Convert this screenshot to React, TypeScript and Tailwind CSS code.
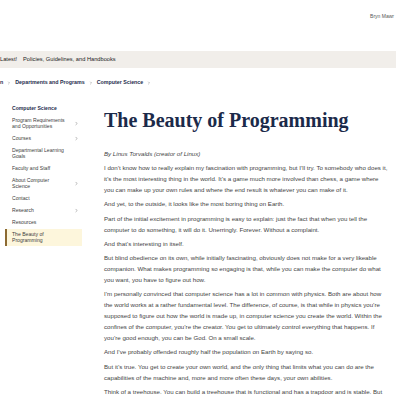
import { ChevronRight } from 'lucide-react';

const sans = { fontFamily: '"Liberation Sans", Arial, sans-serif' };

const sideItems = [
  { label: 'Program Requirements and Opportunities', chevron: true },
  { label: 'Courses', chevron: true },
  { label: 'Departmental Learning Goals', chevron: false },
  { label: 'Faculty and Staff', chevron: false },
  { label: 'About Computer Science', chevron: true },
  { label: 'Contact', chevron: false },
  { label: 'Research', chevron: true },
  { label: 'Resources', chevron: false },
];

const paragraphs = [
  "I don\u2019t know how to really explain my fascination with programming, but I\u2019ll try. To somebody who does it, it\u2019s the most interesting thing in the world. It\u2019s a game much more involved than chess, a game where you can make up your own rules and where the end result is whatever you can make of it.",
  'And yet, to the outside, it looks like the most boring thing on Earth.',
  'Part of the initial excitement in programming is easy to explain: just the fact that when you tell the computer to do something, it will do it. Unerringly. Forever. Without a complaint.',
  "And that\u2019s interesting in itself.",
  'But blind obedience on its own, while initially fascinating, obviously does not make for a very likeable companion. What makes programming so engaging is that, while you can make the computer do what you want, you have to figure out how.',
  "I\u2019m personally convinced that computer science has a lot in common with physics. Both are about how the world works at a rather fundamental level. The difference, of course, is that while in physics you\u2019re supposed to figure out how the world is made up, in computer science you create the world. Within the confines of the computer, you\u2019re the creator. You get to ultimately control everything that happens. If you\u2019re good enough, you can be God. On a small scale.",
  "And I\u2019ve probably offended roughly half the population on Earth by saying so.",
  "But it\u2019s true. You get to create your own world, and the only thing that limits what you can do are the capabilities of the machine and, more and more often these days, your own abilities.",
  "Think of a treehouse. You can build a treehouse that is functional and has a trapdoor and is stable. But everybody knows the difference between a treehouse that is simply solidly built and one that is beautiful, that takes creative advantage of the tree. It\u2019s a matter of combining art and engineering. This is one of the reasons programming can be so captivating and rewarding.",
];

function Crumb({ children }: { children: React.ReactNode }) {
  return <span className="font-bold text-[#1d2c4c]">{children}</span>;
}

function Sep() {
  return <ChevronRight className="w-[4px] h-[4px] text-[#666] shrink-0" strokeWidth={2.5} />;
}

export default function App() {
  return (
    <div className="w-[396px] h-[396px] overflow-hidden bg-white" style={sans}>
      {/* Header */}
      <div className="h-[51px] flex justify-end pt-[12px] pr-[2px]">
        <span className="text-[5px] leading-[8px] text-[#555] whitespace-nowrap">Bryn Mawr</span>
      </div>

      {/* Nav */}
      <div className="h-[17px] bg-[#f1eeea] flex items-center gap-[6px] text-[5.7px] text-[#222] whitespace-nowrap">
        <span>Latest!</span>
        <span>Policies, Guidelines, and Handbooks</span>
      </div>

      {/* Breadcrumb */}
      <div className="h-[29px] flex items-center gap-[4px] text-[5.3px] text-[#1d2c4c] whitespace-nowrap">
        <Crumb>n</Crumb>
        <Sep />
        <Crumb>Departments and Programs</Crumb>
        <Sep />
        <Crumb>Computer Science</Crumb>
        <Sep />
      </div>

      {/* Main */}
      <div className="flex">
        <aside className="ml-[5px] mt-[5px] w-[77px] shrink-0 text-[5.1px] leading-[6px] text-[#3d3d3d]">
          <div className="pl-[7px] py-[3px] font-bold text-[#1d2c4c]">Computer Science</div>
          {sideItems.map((item) => (
            <div key={item.label} className="flex items-center pl-[7px] pr-[3px] py-[3px]">
              <span className="w-[56px]">{item.label}</span>
              {item.chevron && (
                <ChevronRight className="ml-auto w-[5px] h-[5px] text-[#555]" strokeWidth={2} />
              )}
            </div>
          ))}
          <div className="flex mt-[0.5px] bg-[#fdf6dc] border-l-[2px] border-[#8c6a32] pl-[5px] py-[2.5px]">
            <span className="w-[50px] leading-[6px]">The Beauty of Programming</span>
          </div>
        </aside>

        <main className="ml-[22px] mt-[11px] w-[286px] shrink-0">
          <h1
            className="text-[20px] leading-[24px] font-bold text-[#1b2a4a] whitespace-nowrap"
            style={{ fontFamily: '"Liberation Serif", "Times New Roman", serif' }}
          >
            The Beauty of Programming
          </h1>
          <div className="mt-[16px] text-[6.15px] leading-[11px] text-[#444]">
            <p className="italic mb-[3.2px]">By Linus Torvalds (creator of Linux)</p>
            {paragraphs.map((p, i) => (
              <p key={i} className="mb-[3.2px]">
                {p}
              </p>
            ))}
          </div>
        </main>
      </div>
    </div>
  );
}
